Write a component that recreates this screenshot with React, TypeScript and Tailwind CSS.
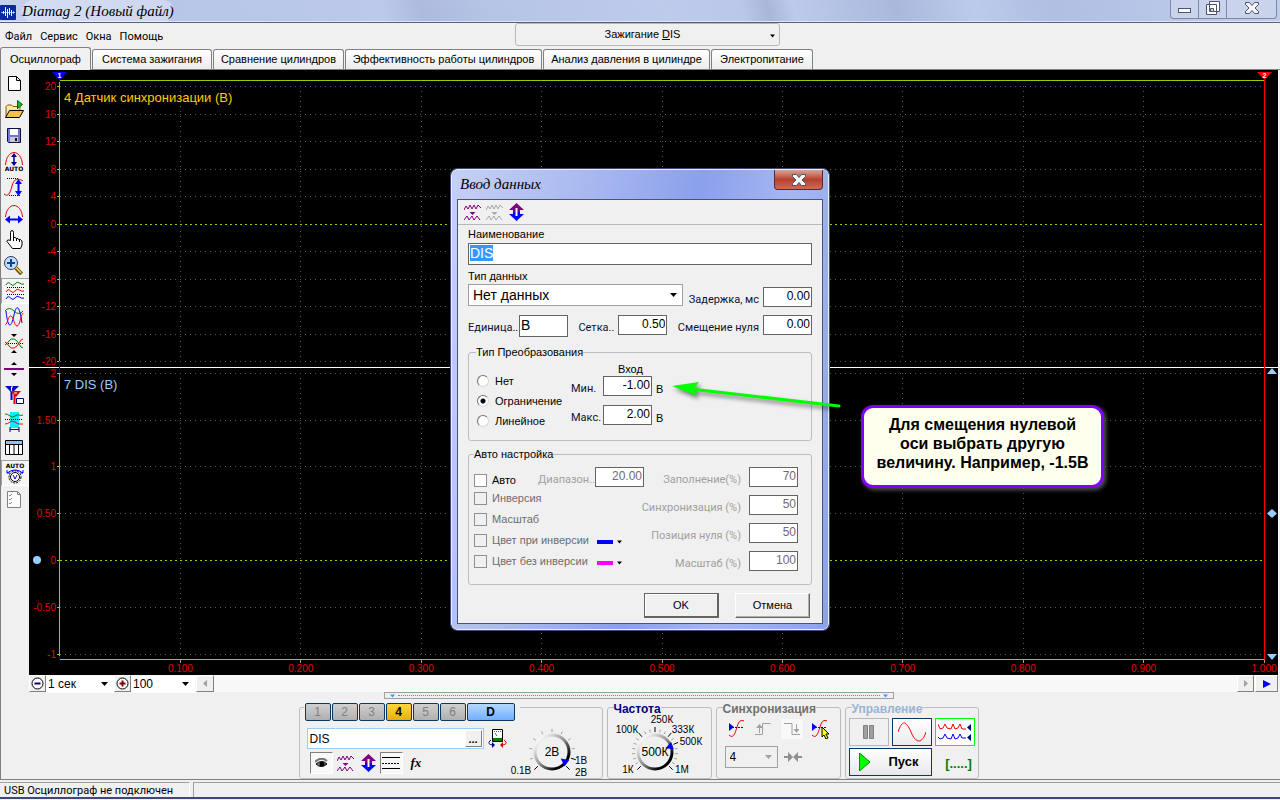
import { useEffect, useRef } from 'react';
import type { ReactNode } from 'react';

const SANS = "font-['Liberation_Sans',Arial,sans-serif]";
const TAHOMA = "font-['Roboto',Tahoma,sans-serif]";
const SCRIPT = "font-['Liberation_Serif',serif] italic";

const TABS = [
  { title: 'Осциллограф', width: 'w-[91px]' },
  { title: 'Система зажигания', width: 'w-[120px]' },
  { title: 'Сравнение цилиндров', width: 'w-[131px]' },
  { title: 'Эффективность работы цилиндров', width: 'w-[197px]' },
  { title: 'Анализ давления в цилиндре', width: 'w-[167px]' },
  { title: 'Электропитание', width: 'w-[102px]' },
];

// Vertical positions are measured from the top of the plot
const CHANNEL_A = [
  ['20', 16], ['16', 44], ['12', 71], ['8', 99], ['4', 126], ['0', 154],
  ['-4', 181], ['-8', 209], ['-12', 236], ['-16', 264], ['-20', 291],
] as [string, number][];

const CHANNEL_B = [
  ['2', 303], ['1.50', 350], ['1', 396], ['0.50', 443], ['0', 490], ['-0.50', 537], ['-1', 584],
] as [string, number][];

const ROWS = [...CHANNEL_A, ...CHANNEL_B];

const TIMES = ['0.100', '0.200', '0.300', '0.400', '0.500', '0.600', '0.700', '0.800', '0.900', '1.000'];

function Caret({ className = '' }: { className?: string }) {
  return (
    <svg width="7" height="4" viewBox="0 0 7 4" className={`pointer-events-none ${className}`} aria-hidden="true">
      <path d="M0 0h7L3.5 4z" fill="currentColor" />
    </svg>
  );
}

/* ---------- title bar and menu ---------- */

function TitleBar() {
  return (
    <header className="flex h-[23px] items-start justify-between border-b border-[#56607c] bg-[linear-gradient(75deg,#c6d1ee_0%,#b7c5e6_14%,#bcc9ea_30%,#adbade_33%,#b5c3e5_38%,#bfcbeb_52%,#bac7e8_58%,#a9b6d8_60%,#bdcaea_62%,#aab8dc_70%,#bccaeb_76%,#b0bfe2_82%,#c0ceee_100%)] shadow-[inset_0_-1px_0_#dfe6f7]">
      <div className="flex items-center gap-[6px]">
        <svg width="16" height="20" viewBox="0 0 16 20" aria-hidden="true">
          <rect x="0" y="4" width="16" height="15" rx="1" fill="#0a2a9c" />
          <path d="M1 11.5h14" stroke="#7fb4ff" />
          <path d="M3.5 10v3M5.5 6v9M7.5 8v9M9.5 7v7M11.5 9v6M13.5 10.500v2" stroke="#eaf6ff" />
        </svg>
        <h1 className={`${SCRIPT} rounded-full bg-white/30 text-[15px] leading-[22px] text-black`}>Diamag 2 (Новый файл)</h1>
      </div>
      <div className="mr-[3px] flex h-[19px] rounded-b-[4px] border border-t-0 border-[#7d89a8] bg-[#c9d3ec]">
        <button aria-label="Свернуть" className="flex w-[28px] items-end justify-center border-r border-[#7d89a8] pb-[5px]">
          <span className="h-[5px] w-[13px] border border-[#4c536b] bg-white" />
        </button>
        <button aria-label="Восстановить" className="flex w-[28px] items-center justify-center border-r border-[#7d89a8] pb-px">
          <svg width="15" height="15" viewBox="0 0 15 15" fill="#fff" stroke="#4c536b" aria-hidden="true">
            <path d="M4.500 .5h10v10h-10zM1.500 3.500h10v10h-10z" />
            <path d="M5.500 7.500h3v3h-3z" fill="#c9d3ec" />
          </svg>
        </button>
        <button aria-label="Закрыть" className="flex w-[49px] items-center justify-center pb-[3px]">
          <CrossMark />
        </button>
      </div>
    </header>
  );
}

function CrossMark() {
  return (
    <svg width="14" height="12" viewBox="0 0 14 12" aria-hidden="true">
      <path d="M.5 .5h4L7 3.500 9.500 .5h4v2L10 6l3.500 3.500v2h-4L7 8.500l-2.500 3h-4v-2L4 6 .5 2.500z" fill="#f6f6f6" stroke="#4c536b" />
    </svg>
  );
}

function MenuRow() {
  return (
    <div className="flex h-[24px] items-start">
      <nav className={`${TAHOMA} flex w-[515px] gap-[8px] pl-[5px] pt-[5px] text-[11px] leading-[18px]`}>
        {['Файл', 'Сервис', 'Окна', 'Помощь'].map((m) => (
          <button key={m}>{m}</button>
        ))}
      </nav>
      <button className="relative h-[23px] w-[265px] rounded-[3px] border border-[#b8b8b8] text-[11px] leading-[21px]">
        <span className="pr-[10px]">Зажигание <u>D</u>IS</span>
        <Caret className="absolute right-[4px] top-[10px] w-[5px]" />
      </button>
    </div>
  );
}

function Tabs() {
  return (
    <div role="tablist" className="flex h-[23px] items-end gap-px border-b border-[#808080]">
      {TABS.map(({ title, width }, i) => (
        <button
          key={title}
          role="tab"
          aria-selected={i === 0}
          className={`${width} whitespace-nowrap rounded-t-[3px] border border-b-0 border-[#808080] text-[11px] ${
            i === 0 ? '-mb-px h-[23px] bg-[#f0f0f0] leading-[21px]' : 'h-[20px] bg-linear-to-b from-white to-[#ececec] leading-[19px]'
          }`}
        >
          {title}
        </button>
      ))}
    </div>
  );
}

/* ---------- left toolbar ---------- */

const WAVE = 'q2-4 4.500-1t4.500 0 4.500-1 4.500 1';

const TOOLS: { name: string; pressed?: boolean; icon: ReactNode }[] = [
  { name: 'Новый', icon: <path d="M6.500 5.500h8l4 4v10h-12zM14.500 5.500v4h4" fill="#fff" stroke="#000" /> },
  {
    name: 'Открыть',
    icon: (
      <>
        <path d="M4 19.500v-10l1.500-1.500h4l1.500 1.500h7V14" fill="#ffe9a0" stroke="#8a5a10" />
        <path d="M3.500 20.500l4-7h14l-4 7z" fill="#f2c14e" stroke="#000" />
        <path d="M15.500 12V3.500l5 4-5 4" fill="#19b52a" stroke="#0b5c12" />
      </>
    ),
  },
  {
    name: 'Сохранить',
    icon: (
      <>
        <path d="M5.500 5.500h13v14h-12l-1-1z" fill="#7478cc" stroke="#101040" />
        <path d="M8 6h8v6H8z" fill="#fff" />
        <path d="M8 14h8v5H8z" fill="#c7c7d8" />
        <path d="M13 15h2v3h-2z" fill="#101040" />
      </>
    ),
  },
  {
    name: 'Авто по вертикали',
    icon: (
      <>
        <path d="M3.500 16C4 8 8 3.500 12 3.500S20 8 20.500 16" fill="none" stroke="#e00000" />
        <path d="M12 6v9" stroke="#000090" strokeWidth="1.500" />
        <path d="M12 4l3 4H9zM12 17l3-4H9z" fill="#000090" />
        <text x="12" y="22" textAnchor="middle" fontSize="6" fontWeight="bold" fontFamily="DejaVu Sans">AUTO</text>
      </>
    ),
  },
  {
    name: 'Размах',
    icon: (
      <>
        <path d="M5 3.500h12M7 20.500h12" stroke="#000" strokeDasharray="1 1" />
        <path d="M2 19c4 3 6 0 8-8s6-8 11-5" fill="none" stroke="#e00000" />
        <path d="M16.500 7v11" stroke="#0000ff" strokeWidth="2" />
        <path d="M16.500 4l3.500 5h-7zM16.500 21l3.500-5h-7z" fill="#0000ff" />
      </>
    ),
  },
  {
    name: 'Период',
    icon: (
      <>
        <path d="M3.500 16C4 9 8 4.500 12 4.500S20 9 20.500 16" fill="none" stroke="#e00000" />
        <path d="M6 18.500h12" stroke="#0000ff" strokeWidth="2" />
        <path d="M3 18.500l5-4v8zM21 18.500l-5-4v8z" fill="#0000ff" />
      </>
    ),
  },
  {
    name: 'Рука',
    icon: (
      <path
        d="M8.500 13.500v-8q0-2 1.500-2t1.500 2v5h2l.5 1h2l.5 1h2l1.500 1.500v4l-1.500 3.500h-8l-5.500-7q0-2 2-1.500z M11.500 10v4M14.500 11.500V14M17.500 12.500V15"
        fill="#fff"
        stroke="#000"
      />
    ),
  },
  {
    name: 'Масштаб',
    icon: (
      <>
        <path d="M14 15l5.500 6" stroke="#5a4a10" strokeWidth="4" />
        <path d="M14 14.500l5 5.500" stroke="#ffd84a" strokeWidth="1.500" />
        <circle cx="9" cy="10" r="6.500" fill="#bfe0ff" stroke="#303860" />
        <path d="M9 6v8M5 10h8" stroke="#1040a0" strokeWidth="2" />
      </>
    ),
  },
  {
    name: 'Раздельно',
    pressed: true,
    icon: (
      <>
        <path d="M4 8.500h17M4 15.500h17" stroke="#000" strokeDasharray="1 1" />
        <path d={`M3 6${WAVE}`} fill="none" stroke="#008000" />
        <path d={`M3 13${WAVE}`} fill="none" stroke="#ff0000" />
        <path d={`M3 20${WAVE}`} fill="none" stroke="#0000ff" />
      </>
    ),
  },
  {
    name: 'Совместно',
    icon: (
      <>
        <path d="M3 6q4-5 9 0t9 0" fill="none" stroke="#008000" />
        <path d="M4 6c2 18 5 18 8 4s6-6 8 8" fill="none" stroke="#0000ff" />
        <path d="M3 19c2 3 3-9 6-8s3 10 6 10 3-9 6-13" fill="none" stroke="#ff0000" />
      </>
    ),
  },
  {
    name: 'Сжать',
    icon: (
      <>
        <path d="M4 12.500h17" stroke="#000" strokeDasharray="1 1" />
        <path d="M3 14q2-1 4-4t5-2 5 5 4 4" fill="none" stroke="#008000" />
        <path d="M3 11q2 1 4 4t5 2 5-5 4-4" fill="none" stroke="#ff0000" />
        <path d="M12 6L9 3h6zM12 19l-3 3h6z" />
      </>
    ),
  },
  {
    name: 'Ноль',
    icon: (
      <>
        <path d="M2 12h20" stroke="#800080" strokeWidth="2" />
        <path d="M12 5l3 3H9zM12 19l3-3H9z" />
      </>
    ),
  },
  {
    name: 'Маркеры',
    icon: (
      <>
        <path d="M3 3h14l-7 7z" fill="#0000c8" />
        <path d="M9.500 6v11" stroke="#0000c8" strokeWidth="2" />
        <path d="M8 8h11l-5 6z" fill="#e00000" />
        <path d="M12.500 12v9" stroke="#e00000" strokeWidth="2" />
        <path d="M9 4h2M9.500 4v4M12 10h3" stroke="#fff" />
        <path d="M14.500 15.500h7v5h-7z" fill="#fff" stroke="#000080" />
      </>
    ),
  },
  {
    name: 'Область',
    icon: (
      <>
        <path d="M8 3h9v16H8z" fill="#00f0ff" />
        <path d="M3 10.500h18" stroke="#000" strokeDasharray="1 1" />
        <path d="M3 5q3 0 5 2t5 0 4-1 4 0" fill="none" stroke="#008000" />
        <path d="M3 15q3 0 5-2t5 0 4 2 4 0" fill="none" stroke="#ff0000" />
        <path d="M8 20.500h9M8 18v5M17 18v5" stroke="#000080" />
      </>
    ),
  },
  {
    name: 'Таблица',
    icon: (
      <>
        <path d="M3.500 5.500h17v14h-17z" fill="#fff" stroke="#000" />
        <path d="M4 6h16v3H4z" fill="#8fc0f0" />
        <path d="M3 9.500h18M7.500 9v10M12 9v10M16.500 9v10" stroke="#000" />
      </>
    ),
  },
  {
    name: 'Автонастройка',
    pressed: true,
    icon: (
      <>
        <text x="12" y="7" textAnchor="middle" fontSize="6" fontWeight="bold" fontFamily="DejaVu Sans">AUTO</text>
        <path d="M4 12q8-6 16 0M4 9v3h3M20 9v3h-3" fill="none" stroke="#0000ff" />
        <circle cx="12" cy="16" r="6" fill="#fff" stroke="#000" strokeDasharray="2 1" />
        <circle cx="12" cy="16" r="4.500" fill="#fff" stroke="#000" />
        <path d="M10 14l2 4 2-4" fill="none" stroke="#0000ff" />
      </>
    ),
  },
  {
    name: 'Отчёт',
    icon: (
      <>
        <path d="M5.500 4.500h10l3 3v13h-13zM15.500 4.500v3h3" fill="#fbfbfb" stroke="#808080" />
        <path d="M7 8l1 1 2-2M7 12l1 1 2-2M7 16l1 1 2-2" fill="none" stroke="#909090" />
      </>
    ),
  },
];

function Toolbar() {
  return (
    <aside className="flex w-[29px] shrink-0 flex-col border-l border-[#808080]">
      {TOOLS.map(({ name, pressed, icon }) => (
        <button
          key={name}
          aria-label={name}
          className={`flex h-[26px] items-center justify-center pr-[2px] ${
            pressed ? 'border-y border-l border-b-white border-l-[#a0a0a0] border-t-[#a0a0a0] bg-[#f6f6f6]' : ''
          }`}
        >
          <svg width="24" height="24" viewBox="0 0 24 24" aria-hidden="true">{icon}</svg>
        </button>
      ))}
    </aside>
  );
}

/* ---------- plot ---------- */

function Plot() {
  return (
    <div className="flex h-[605px] overflow-hidden border-r border-white bg-black">
      <svg className="h-full w-[31px] shrink-0" fontFamily="Liberation Sans" fontSize="10" fill="#e80000" aria-hidden="true">
        {ROWS.map(([label, y]) => (
          <g key={y}>
            <text x="27" y={y + 4} textAnchor="end">{label}</text>
            <path d={`M28 ${y + 0.5}h3`} stroke="#99cc00" />
          </g>
        ))}
        <path d="M30.500 10v580" stroke="#99cc00" />
        <circle cx="8" cy="490" r="4" fill="#99ccff" />
        <path d="M0 297.500h31" stroke="#fff" />
      </svg>

      <svg className="h-full min-w-0 flex-1 overflow-visible" fontFamily="Liberation Sans">
        {ROWS.map(([label, y]) => (
          <line
            key={y}
            x1="0"
            x2="100%"
            y1={y + 0.5}
            y2={y + 0.5}
            stroke={label === '0' ? '#99cc00' : '#585858'}
            strokeDasharray={label === '0' ? '2 3' : '1 4'}
            shapeRendering="crispEdges"
          />
        ))}
        {TIMES.slice(0, -1).map((t, i) => (
          <g key={t} stroke="#585858" strokeDasharray="1 4" shapeRendering="crispEdges">
            <line x1={`${(i + 1) * 10}%`} x2={`${(i + 1) * 10}%`} y1="16" y2="291" />
            <line x1={`${(i + 1) * 10}%`} x2={`${(i + 1) * 10}%`} y1="303" y2="588" />
          </g>
        ))}
        {TIMES.map((t, i) => (
          <g key={t}>
            <line x1={`${(i + 1) * 10}%`} x2={`${(i + 1) * 10}%`} y1="590" y2="593" stroke="#a0a0a0" shapeRendering="crispEdges" />
            <text x={`${(i + 1) * 10}%`} y="602" textAnchor="middle" fontSize="10" fill="#e80000">{t}</text>
          </g>
        ))}
        <line x1="0" x2="100%" y1="10.500" y2="10.500" stroke="#99cc00" />
        <line x1="0" x2="100%" y1="589.500" y2="589.500" stroke="#99cc00" />
        <line x1="0" x2="100%" y1="297.500" y2="297.500" stroke="#fff" />
        <path d="M-.5 4v8M-.5 291v12M-.5 586v4" stroke="#0000ff" />
        <path d="M-8 2h15L-.5 10z" fill="#0000ff" />
        <text x="-.5" y="8" textAnchor="middle" fontSize="7" fontWeight="bold" fill="#fff">1</text>
        <text x="4" y="32" fontSize="13" fill="#ffcc00">4 Датчик синхронизации (В)</text>
        <text x="4" y="319" fontSize="13" fill="#99ccff">7 DIS (В)</text>
      </svg>

      <svg className="h-full w-[14px] shrink-0 overflow-visible" fontFamily="Liberation Sans" aria-hidden="true">
        <path d="M0 297.500h14" stroke="#fff" />
        <path d="M.5 10v580" stroke="#ff0000" />
        <path d="M-7 2H8L.5 10z" fill="#ff0000" />
        <text x=".5" y="8" textAnchor="middle" fontSize="7" fontWeight="bold" fill="#fff">2</text>
        <path d="M8 298l5 6H3zM8 439l5 4.500-5 4.500-5-4.500zM3 584h10l-5 6z" fill="#99ccff" />
      </svg>
    </div>
  );
}

function ScrollRow() {
  const raised = 'flex items-center justify-center border border-b-[#808080] border-l-white border-r-[#808080] border-t-white bg-[#f0f0f0]';
  return (
    <div className="flex h-[17px] bg-[#f8f8f8]">
      <button aria-label="Медленнее" className={`${raised} w-[17px]`}>
        <svg width="13" height="13" viewBox="0 0 13 13" aria-hidden="true">
          <circle cx="6.500" cy="6.500" r="5.500" fill="#fff" stroke="#000" />
          <path d="M3.500 6.500h6" stroke="#000080" strokeWidth="2" />
        </svg>
      </button>
      <SmallSelect label="Развёртка" value="1 сек" className="w-[68px]" />
      <button aria-label="Быстрее" className={`${raised} w-[17px]`}>
        <svg width="13" height="13" viewBox="0 0 13 13" aria-hidden="true">
          <circle cx="6.500" cy="6.500" r="5.500" fill="#fff" stroke="#000" />
          <path d="M3.500 6.500h6M6.500 3.500v6" stroke="#800000" strokeWidth="2" />
        </svg>
      </button>
      <SmallSelect label="Масштаб времени" value="100" className="w-[64px]" />
      <button aria-label="Влево" className={`${raised} ml-px w-[18px] text-[#a0a0a0]`}>
        <svg width="4" height="7" aria-hidden="true"><path d="M4 0v7L0 3.500z" fill="currentColor" /></svg>
      </button>
      <div className="flex-1" />
      <button aria-label="Вправо" className={`${raised} w-[17px] text-[#a0a0a0]`}>
        <svg width="4" height="7" aria-hidden="true"><path d="M0 0v7l4-3.500z" fill="currentColor" /></svg>
      </button>
      <button aria-label="Воспроизвести" className={`${raised} ml-px mr-px w-[23px] text-[#0000ff]`}>
        <svg width="8" height="8" aria-hidden="true"><path d="M0 0v8l8-4z" fill="currentColor" /></svg>
      </button>
    </div>
  );
}

function SmallSelect({ label, value, className }: { label: string; value: string; className: string }) {
  return (
    <div className={`relative ${className}`}>
      <select aria-label={label} className="h-full w-full appearance-none bg-white pl-[2px] text-[12px] leading-[16px]">
        <option>{value}</option>
      </select>
      <Caret className="absolute right-[6px] top-[7px]" />
    </div>
  );
}

/* ---------- bottom panel ---------- */

function Group({ title, color, className, children }: { title: string; color: string; className: string; children: ReactNode }) {
  return (
    <fieldset className={`h-[79px] rounded-[3px] border border-[#bdbdbd] ${className}`}>
      <legend className={`ml-[6px] h-[14px] text-[12px] font-bold leading-[18px] ${color}`}>{title}</legend>
      {children}
    </fieldset>
  );
}

interface KnobProps {
  width: number;
  height: number;
  cx: number;
  cy: number;
  value: string;
  steps: number;
  major: number[];
  pointer: number;
  labels: [string, number, number][];
}

function Knob({ width, height, cx, cy, value, steps, major, pointer, labels }: KnobProps) {
  const at = (deg: number, r: number) => {
    const a = (deg * Math.PI) / 180;
    return `${cx + r * Math.sin(a)} ${cy - r * Math.cos(a)}`;
  };
  const ticks = Array.from({ length: steps + 1 }, (_, i) => i);
  return (
    <svg width={width} height={height} fontFamily="Liberation Sans" fontSize="10" textAnchor="middle">
      <defs>
        <linearGradient id={`rim${steps}`} x1="0" y1="0" x2="1" y2="1">
          <stop offset="0.1" stopColor="#fff" />
          <stop offset="0.5" stopColor="#909090" />
          <stop offset="0.8" stopColor="#000" />
        </linearGradient>
      </defs>
      {ticks.map((i) => {
        const deg = -135 + (270 / steps) * i;
        const isMajor = major.includes(i);
        return <path key={i} d={`M${at(deg, 20)}L${at(deg, isMajor ? 25 : 23)}`} stroke={isMajor ? '#000' : '#a0a0a0'} />;
      })}
      <circle cx={cx} cy={cy} r="17" fill="#f0f0f0" stroke={`url(#rim${steps})`} strokeWidth="3" />
      <path d={`M${at(pointer, 11)}L${at(pointer - 12, 19)}L${at(pointer + 12, 19)}z`} fill="#0000ff" />
      <text x={cx} y={cy + 4} fontSize="12">{value}</text>
      {labels.map(([text, x, y]) => (
        <text key={text} x={x} y={y}>{text}</text>
      ))}
    </svg>
  );
}

function SqueezeIcon({ color }: { color: string }) {
  return (
    <svg width="17" height="17" viewBox="0 0 17 17" fill="none" stroke={color} aria-hidden="true">
      <path d="M0 6l2-4 2 3 2-4 2 4 2-4 2 4 2-4 3 3M0 16l3-4 2 4 3-4 2 4 3-4 3 4" />
      <path d="M5.500 8h6l-3 3z" fill={color} stroke="none" />
    </svg>
  );
}

function UpDownIcon() {
  return (
    <svg width="15" height="18" viewBox="0 0 15 18" aria-hidden="true">
      <path d="M7.500 0L15 7h-4v2H4V7H0z" fill="#800080" />
      <path d="M7.500 18L0 11h4V9h7v2h4z" fill="#0000ff" />
      <path d="M7.500 5v8" stroke="#fff" strokeWidth="2" />
    </svg>
  );
}

function ChannelGroup() {
  return (
    <section className="mt-[7px] flex h-[72px] w-[304px] rounded-[3px] border border-[#bdbdbd]">
      <div className="w-[208px] pl-[4px]">
        <div className="-mt-[5px] flex w-[216px] gap-px bg-[#f0f0f0] pl-px">
          {['1', '2', '3', '4', '5', '6'].map((n) => (
            <button
              key={n}
              className={`h-[18px] w-[26px] shrink-0 rounded-[2px] border border-[#0b3763] text-[12px] leading-[16px] ${
                n === '4' ? 'bg-linear-to-b from-[#ffd83c] to-[#e6b000] font-bold text-black' : 'bg-linear-to-b from-[#d0d0d0] to-[#b0b0b0] text-[#808080]'
              }`}
            >
              {n}
            </button>
          ))}
          <button className="h-[18px] w-[48px] shrink-0 rounded-[2px] border border-[#0b3763] bg-linear-to-b from-[#b5d8ff] to-[#6fb0ff] text-[12px] font-bold leading-[16px]">
            D
          </button>
        </div>

        <div className="mt-[7px] flex items-center gap-[4px] pl-[3px]">
          <div className="flex h-[21px] w-[177px] border border-[#99ccff] bg-white p-px">
            <input aria-label="Имя канала" defaultValue="DIS" className="min-w-0 flex-1 px-px text-[12px] outline-none" />
            <button className="w-[17px] border border-b-[#808080] border-l-white border-r-[#808080] border-t-white bg-[#f0f0f0] text-[11px] font-bold leading-[8px]">
              ...
            </button>
          </div>
          <svg width="19" height="19" viewBox="0 0 19 19" fill="none" aria-hidden="true">
            <path d="M4.500 .5h10v12h-10z" fill="#fff" stroke="#000" />
            <path d="M5 9h9v3H5z" fill="#008000" />
            <path d="M6 2.500h7" stroke="#606060" strokeDasharray="1 1" />
            <path d="M7 4l2 3" stroke="#606060" />
            <path d="M3 11c-4 3-2 5 3 5" stroke="#000090" />
            <path d="M7 16l-3-3v6z" fill="#000090" />
            <path d="M16 11c4 3 2 5-3 5" stroke="#e00000" />
            <path d="M12 16l3-3v6z" fill="#e00000" />
          </svg>
        </div>

        <div className="mt-[3px] flex items-center gap-[4px] pl-[6px]">
          <button aria-label="Показать" className="flex h-[22px] w-[23px] items-center justify-center border border-b-white border-l-[#808080] border-r-white border-t-[#808080] bg-[#f8f8f8]">
            <svg width="13" height="10" viewBox="0 0 13 10" aria-hidden="true">
              <path d="M0 4q6-6 12-1" fill="none" stroke="#777" strokeWidth="2" />
              <path d="M1 6q6-5 11 0-6 5-11 0z" fill="#888" stroke="#000" />
              <circle cx="7" cy="6" r="2.500" />
            </svg>
          </button>
          <button aria-label="Сжать канал" className="w-[18px]"><SqueezeIcon color="#800080" /></button>
          <button aria-label="Сдвинуть канал" className="ml-[2px]"><UpDownIcon /></button>
          <button aria-label="Сетка канала" className="flex h-[22px] w-[23px] items-center justify-center border border-b-white border-l-[#808080] border-r-white border-t-[#808080] bg-[#f8f8f8]">
            <svg width="18" height="14" viewBox="0 0 18 14" stroke="#000" aria-hidden="true">
              <path d="M0 1.500h18M0 12.500h18" />
              <path d="M0 7.500h18" strokeDasharray="2 1" />
            </svg>
          </button>
          <button className="pl-[4px] font-['Liberation_Serif',serif] text-[13px] font-bold italic leading-[20px]">fx</button>
        </div>
      </div>
      <div className="pt-[18px]">
        <Knob
          width={90}
          height={52}
          cx={44}
          cy={26}
          value="2В"
          steps={10}
          major={[0, 9, 10]}
          pointer={127}
          labels={[['0.1В', 13, 48], ['1В', 73, 38], ['2В', 73, 50]]}
        />
      </div>
    </section>
  );
}

function SyncIcon({ cursor }: { cursor?: boolean }) {
  return (
    <svg width="19" height="20" viewBox="0 0 19 20" fill="none" aria-hidden="true">
      <path d="M1 16c4 4 6-1 8-8s4-7 7-6" stroke="#e00000" />
      <path d="M4 8.500h12" stroke="#0000ff" strokeDasharray="2 1" />
      <path d="M1 4v8l5-4z" fill="#0000ff" />
      {cursor && <path d="M11 8v10l2-2 2 4 2-1-2-4h3z" fill="#ffff00" stroke="#000" />}
    </svg>
  );
}

function SyncGroup() {
  return (
    <Group title="Синхронизация" color="text-[#707070]" className="w-[125px]">
      <div className="flex gap-[8px] pl-[11px] pt-[5px]">
        <button aria-label="Вход синхронизации"><SyncIcon /></button>
        <button aria-label="По фронту" className="w-[18px]">
          <svg width="18" height="20" viewBox="0 0 18 20" fill="none" stroke="#a0a0a0" aria-hidden="true">
            <path d="M0 15.500h7.500V4.500h8M4.500 14V6" />
            <path d="M4.500 5L8 9H1z" fill="#a0a0a0" stroke="none" />
          </svg>
        </button>
        <button aria-label="По спаду" className="bg-[#f8f8f8] px-[2px]">
          <svg width="18" height="20" viewBox="0 0 18 20" fill="none" stroke="#a0a0a0" aria-hidden="true">
            <path d="M1 4.500h8v11h8M13.500 5v8" />
            <path d="M13.500 14l-3-4h6z" fill="#a0a0a0" stroke="none" />
          </svg>
        </button>
        <button aria-label="Указать вход"><SyncIcon cursor /></button>
      </div>
      <div className="flex items-center gap-[6px] pl-[8px] pt-[7px]">
        <div className="relative h-[22px] w-[53px]">
          <select aria-label="Канал синхронизации" className="h-full w-full appearance-none border border-[#a0a0a0] bg-[#f0f0f0] pl-[4px] text-[12px]">
            <option>4</option>
          </select>
          <Caret className="absolute right-[6px] top-[9px] text-[#a0a0a0]" />
        </div>
        <svg width="18" height="10" viewBox="0 0 18 10" fill="#909090" aria-hidden="true">
          <path d="M0 4h4V0l5 5-5 5V6H0zM18 4h-4V0L9 5l5 5V6h4z" />
        </svg>
      </div>
    </Group>
  );
}

function ControlGroup() {
  return (
    <Group title="Управление" color="text-[#99b4d1]" className="w-[134px]">
      <div className="grid grid-cols-[40px_40px_40px] gap-x-[3px] gap-y-[2px] pl-[3px] pt-[4px]">
        <button aria-label="Пауза" className="flex h-[28px] items-center justify-center border border-[#b8b8b8]">
          <svg width="11" height="14" aria-hidden="true">
            <path d="M.5 .5h4v13h-4zM6.500 .5h4v13h-4z" fill="#a0a0a0" stroke="#808080" />
          </svg>
        </button>
        <button aria-label="Синусоида" className="flex h-[28px] items-center justify-center border border-[#0b3763] bg-linear-to-b from-white to-[#ececec]">
          <svg width="28" height="20" viewBox="0 0 28 20" fill="none" stroke="#ff0000" aria-hidden="true">
            <path d="M0 10C4-2 8-2 13 10s11 12 15 0" />
          </svg>
        </button>
        <button aria-label="Каналы" className="flex h-[28px] items-center justify-center border border-[#00ff00] bg-white">
          <svg width="34" height="20" viewBox="0 0 34 20" fill="none" aria-hidden="true">
            <path d="M0 2l2 5 3-1 2-4 2 4 4 1 2-5 2 5 3-1 2-4 2 5h4" stroke="#ff0000" />
            <path d="M0 15l2 2 3-1 2-4 2 4 4 1 2-5 2 5 3-1 2-4 2 4h4" stroke="#0000ff" />
            <path d="M33 2v7l-4-3.500zM33 12v7l-4-3.500z" fill="#000080" />
          </svg>
        </button>
        <button className="col-span-2 flex h-[28px] items-center gap-[18px] border border-[#0b3763] bg-linear-to-b from-white to-[#e8e8e8] pl-[9px] text-[13px] font-bold">
          <svg width="12" height="18" aria-hidden="true"><path d="M.5 0v18L11 9z" fill="#00ff00" stroke="#009000" /></svg>
          Пуск
        </button>
        <button className="pt-[4px] pl-[8px] text-[13px] font-bold text-[#008000]">[.....]</button>
      </div>
    </Group>
  );
}

function BottomPanel() {
  return (
    <footer className="border-l border-[#808080] pr-[4px]">
      <div className="mx-auto flex h-[7px] w-[510px] items-center gap-[3px] border border-[#a0a0a0] px-[5px] text-[#3399ff]">
        <Caret className="w-[5px]" />
        <span className="flex-1 border-t border-dotted border-[#3399ff]" />
        <Caret className="w-[5px]" />
      </div>
      <div className="flex h-[80px] justify-center gap-[4px] pt-px">
        <ChannelGroup />
        <Group title="Частота" color="text-[#000080]" className="w-[105px]">
          <Knob
            width={100}
            height={62}
            cx={47}
            cy={38}
            value="500К"
            steps={20}
            major={[0, 7, 10, 13, 15, 20]}
            pointer={70}
            labels={[['250К', 54, 9], ['100К', 19, 19], ['333К', 75, 19], ['500К', 83, 31], ['1К', 20, 59], ['1М', 74, 59]]}
          />
        </Group>
        <SyncGroup />
        <ControlGroup />
      </div>
    </footer>
  );
}

function StatusBar() {
  return (
    <div className={`${TAHOMA} flex h-[20px] gap-[3px] border-b-2 border-b-[#3d4a78] border-t border-t-[#808080] pt-[2px] text-[11px] leading-[15px]`}>
      <div className="w-[190px] border-r border-t border-r-white border-t-[#a0a0a0] pl-[4px]">USB Осциллограф не подключен</div>
      <div className="flex-1 border-l border-t border-[#a0a0a0]" />
    </div>
  );
}

/* ---------- data entry dialog ---------- */

interface FieldProps {
  id: string;
  label: string;
  value: string;
  disabled?: boolean;
  className?: string;
}

// Numeric field with its caption on the left
function Field({ id, label, value, disabled, className = '' }: FieldProps) {
  return (
    <div className={`flex items-start justify-end whitespace-nowrap ${disabled ? 'gap-[8px]' : 'gap-[4px]'} ${className}`}>
      <label htmlFor={id} className={`${TAHOMA} pt-[6px] text-[11px] leading-[14px] ${disabled ? 'text-[#a0a0a0]' : 'text-[#101030]'}`}>
        {label}
      </label>
      <input
        id={id}
        defaultValue={value}
        disabled={disabled}
        className={`h-[20px] w-[49px] shrink-0 border border-[#646464] bg-white px-px pb-[2px] text-right text-[12px] ${disabled ? 'text-[#6d6d6d]' : 'text-black'}`}
      />
    </div>
  );
}

function Dialog() {
  const nameRef = useRef<HTMLInputElement>(null);

  useEffect(() => {
    nameRef.current?.focus();
    nameRef.current?.select();
  }, []);

  return (
    <div
      role="dialog"
      aria-label="Ввод данных"
      className="absolute left-[451px] top-[169px] w-[378px] rounded-[6px] border border-[#e8eefc] bg-[linear-gradient(100deg,#c5d0f4_0%,#a9b9f0_30%,#8ba0ec_55%,#a5b6f2_75%,#8ba2ee_100%)] px-[5px] pb-[5px] outline outline-[#404a70]"
    >
      <div className="flex h-[29px] items-start justify-between pl-[3px]">
        <h2 className={`${SCRIPT} text-[15px] leading-[28px] text-black`}>Ввод данных</h2>
        <button aria-label="Закрыть окно" className="flex h-[20px] w-[49px] items-center justify-center rounded-b-[4px] border border-t-0 border-[#5d2a2a] bg-linear-to-b from-[#d9a29a] via-[#b8402c] to-[#cf6a58]">
          <CrossMark />
        </button>
      </div>

      <div className="border border-[#4a5478] bg-[#f0f0f0]">
        <div className="flex h-[25px] items-center gap-[5px] border-b border-[#b8b8b8] pl-[6px]">
          <button aria-label="Сжать"><SqueezeIcon color="#800080" /></button>
          <button aria-label="Растянуть" disabled><SqueezeIcon color="#a8a8a8" /></button>
          <button aria-label="Сдвиг" className="pl-px"><UpDownIcon /></button>
        </div>

        <form className="px-[10px] pb-[5px] pt-px text-[11px]" onSubmit={(e) => e.preventDefault()}>
          <label htmlFor="name" className="block pb-px leading-[16px]">Наименование</label>
          <input
            id="name"
            ref={nameRef}
            defaultValue="DIS"
            className="block h-[22px] w-full border border-[#646464] bg-white px-px pb-[2px] text-[14px] outline-none selection:bg-[#3399ff] selection:text-white"
          />

          <div className="flex items-start justify-between pt-[4px]">
            <div className="w-[215px]">
              <label htmlFor="kind" className="block leading-[15px]">Тип данных</label>
              <div className="relative">
                <select id="kind" className="h-[22px] w-full appearance-none border border-[#a0a0a0] bg-white pl-[4px] text-[14px]">
                  <option>Нет данных</option>
                </select>
                <Caret className="absolute right-[6px] top-[9px]" />
              </div>
            </div>
            <Field id="delay" label="Задержка, мс" value="0.00" className="pt-[18px]" />
          </div>

          <div className="flex justify-between pt-[8px]">
            <div className="flex items-start">
              <label htmlFor="unit" className={`${TAHOMA} w-[51px] pt-[6px] text-[11px] leading-[14px] text-[#101030]`}>Единица..</label>
              <input id="unit" defaultValue="В" className="h-[22px] w-[49px] border border-[#646464] bg-white px-px pb-[2px] text-[14px]" />
            </div>
            <Field id="grid" label="Сетка.." value="0.50" />
            <Field id="zero" label="Смещение нуля" value="0.00" />
          </div>

          <fieldset className="mt-[8px] h-[96px] rounded-[3px] border border-[#bdbdbd]">
            <legend className="ml-[7px] h-[14px] leading-[15px]">Тип Преобразования</legend>
            <div className="flex pl-[8px] pt-[3px]">
              <div className="flex w-[94px] flex-col pt-[9px]">
                {['Нет', 'Ограничение', 'Линейное'].map((name) => (
                  <label key={name} className="flex h-[20px] items-center gap-[6px]">
                    <input
                      type="radio"
                      name="conversion"
                      defaultChecked={name === 'Ограничение'}
                      className="h-[12px] w-[12px] shrink-0 appearance-none rounded-full border border-b-[#d8d8d8] border-l-[#707070] border-r-[#d8d8d8] border-t-[#707070] bg-white checked:bg-[radial-gradient(circle,#000_2px,#fff_3px)]"
                    />
                    {name}
                  </label>
                ))}
              </div>
              <div>
                <p className="pl-[47px] leading-[14px]">Вход</p>
                {[['min', 'Мин.', '-1.00'], ['max', 'Макс.', '2.00']].map(([id, label, value]) => (
                  <div key={id} className="flex h-[29px] items-start">
                    <label htmlFor={id} className={`${TAHOMA} w-[32px] pt-[6px] text-[11px] leading-[14px] text-[#101030]`}>{label}</label>
                    <input id={id} defaultValue={value} className="h-[20px] w-[49px] border border-[#646464] bg-white px-px pb-[2px] text-right text-[12px]" />
                    <span className="pl-[4px] pt-[6px] leading-[14px]">В</span>
                  </div>
                ))}
              </div>
            </div>
          </fieldset>

          <fieldset className="mt-[6px] flex h-[138px] rounded-[3px] border border-[#bdbdbd]">
            <legend className="ml-[5px] h-[14px] leading-[15px]">Авто настройка</legend>
            <div className="flex justify-between pl-[5px] pr-[12px] pt-[6px]">
              <div className="w-[170px]">
                <div className="flex items-start justify-between">
                  <CheckRow label="Авто" />
                  <div className="flex items-start">
                    <label htmlFor="range" className={`${TAHOMA} pt-[6px] text-[11px] leading-[14px] text-[#a0a0a0]`}>Диапазон..</label>
                    <input id="range" disabled defaultValue="20.00" className="h-[20px] w-[49px] border border-[#646464] bg-white px-px pb-[2px] text-right text-[12px] text-[#6d6d6d]" />
                  </div>
                </div>
                <CheckRow label="Инверсия" disabled />
                <CheckRow label="Масштаб" disabled />
                <CheckRow label="Цвет при инверсии" disabled swatch="bg-[#0000ff]" />
                <CheckRow label="Цвет без инверсии" disabled swatch="bg-[#ff00ff]" />
              </div>
              <div className="flex w-[154px] flex-col gap-[8px]">
                <Field id="fill" label="Заполнение(%)" value="70" disabled />
                <Field id="sync" label="Синхронизация (%)" value="50" disabled />
                <Field id="pos" label="Позиция нуля (%)" value="50" disabled />
                <Field id="scale" label="Масштаб (%)" value="100" disabled />
              </div>
            </div>
          </fieldset>

          <div className="flex justify-end gap-[16px] pr-[2px] pt-[8px]">
            <button className="h-[25px] w-[75px] border border-b-2 border-r-2 border-[#646464] bg-[#f0f0f0] shadow-[inset_1px_1px_0_#fff]">OK</button>
            <button type="button" className="h-[25px] w-[75px] border border-b-[#646464] border-l-white border-r-[#646464] border-t-white bg-[#f0f0f0] shadow-[inset_-1px_-1px_0_#b0b0b0]">Отмена</button>
          </div>
        </form>
      </div>
    </div>
  );
}

function CheckRow({ label, disabled, swatch }: { label: string; disabled?: boolean; swatch?: string }) {
  return (
    <div className={`flex h-[21px] items-center whitespace-nowrap ${disabled ? 'text-[#6d6d6d]' : 'pt-[6px]'}`}>
      <label className="flex items-center gap-[5px]">
        <input
          type="checkbox"
          disabled={disabled}
          className={`h-[13px] w-[13px] shrink-0 appearance-none border border-[#909090] ${disabled ? 'bg-[#f0f0f0]' : 'bg-white'}`}
        />
        {label}
      </label>
      {swatch && (
        <button type="button" aria-label={`Выбрать: ${label}`} disabled className="ml-auto flex items-center gap-[4px] pr-[22px] pt-[3px] text-black">
          <span className={`h-[4px] w-[16px] ${swatch}`} />
          <Caret className="w-[5px]" />
        </button>
      )}
    </div>
  );
}

function Hint() {
  return (
    <>
      <svg width="180" height="40" viewBox="0 0 180 40" className="pointer-events-none absolute left-[666px] top-[373px] drop-shadow-[2px_3px_2px_rgba(0,0,0,0.5)]" aria-hidden="true">
        <path d="M25 16l148 17" stroke="#00ff00" strokeWidth="3" strokeLinecap="round" />
        <path d="M6 13l27-4-5 7 3 7z" fill="#00ff00" />
      </svg>
      <p className="absolute left-[861px] top-[405px] h-[83px] w-[243px] rounded-[12px] border-[3px] border-[#7f00ff] bg-[#ffffee] pt-[7px] text-center text-[16px] font-bold leading-[19px] shadow-[2px_2px_4px_#555]">
        Для смещения нулевой
        <br />
        оси выбрать другую
        <br />
        величину. Например, -1.5В
      </p>
    </>
  );
}

export default function App() {
  return (
    <div className={`${SANS} relative flex min-h-screen flex-col bg-[#f0f0f0] text-[12px] text-black`}>
      <TitleBar />
      <MenuRow />
      <Tabs />
      <main className="flex">
        <Toolbar />
        <div className="min-w-0 flex-1 pr-px">
          <Plot />
          <ScrollRow />
        </div>
      </main>
      <BottomPanel />
      <StatusBar />
      <Dialog />
      <Hint />
    </div>
  );
}
